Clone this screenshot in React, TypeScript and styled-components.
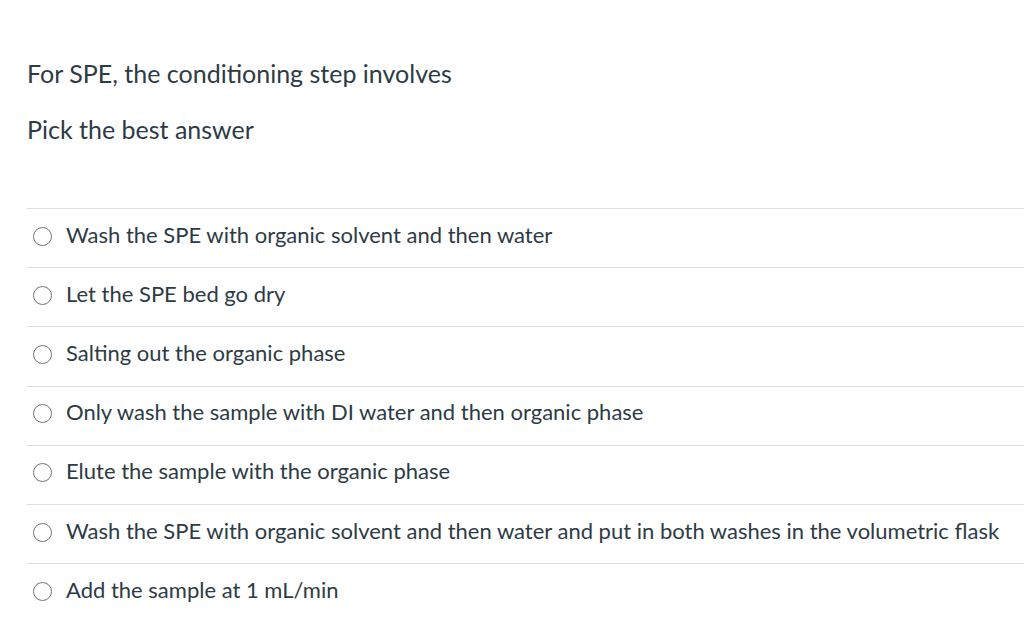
import React from "react";
import styled, { createGlobalStyle } from "styled-components";

const Global = createGlobalStyle`
  html, body { margin: 0; padding: 0; background: #ffffff; }
  body { font-family: Lato, "Open Sans", sans-serif; color: #2d3b45; }
`;

const Page = styled.div`
  padding: 55px 0 0 27px;
  width: 997px;
`;

const Question = styled.p`
  margin: 0;
  font-size: 25px;
  line-height: 36px;
`;

const Instruction = styled.p`
  margin: 20px 0 0;
  font-size: 25px;
  line-height: 36px;
`;

const Answers = styled.div`
  margin-top: 61px;
  display: flex;
  flex-direction: column;
`;

const Row = styled.label`
  display: flex;
  align-items: center;
  gap: 14px;
  height: 59.2px;
  padding: 0 0 8px 6px;
  border-top: 1px solid #dedede;
  box-sizing: border-box;
  font-size: 22px;
  cursor: pointer;
  white-space: nowrap;
`;

const Radio = styled.span`
  width: 19px;
  height: 19px;
  margin-top: 4px;
  border: 1.6px solid #737373;
  border-radius: 50%;
  flex: none;
  box-sizing: border-box;
`;

const answers = [
  "Wash the SPE with organic solvent and then water",
  "Let the SPE bed go dry",
  "Salting out the organic phase",
  "Only wash the sample with DI water and then organic phase",
  "Elute the sample with the organic phase",
  "Wash the SPE with organic solvent and then water and put in both washes in the volumetric flask",
  "Add the sample at 1 mL/min",
];

export default function App() {
  return (
    <>
      <Global />
      <Page>
        <Question>For SPE, the conditioning step involves</Question>
        <Instruction>Pick the best answer</Instruction>
        <Answers>
          {answers.map((a) => (
            <Row key={a}>
              <Radio />
              <span>{a}</span>
            </Row>
          ))}
        </Answers>
      </Page>
    </>
  );
}
